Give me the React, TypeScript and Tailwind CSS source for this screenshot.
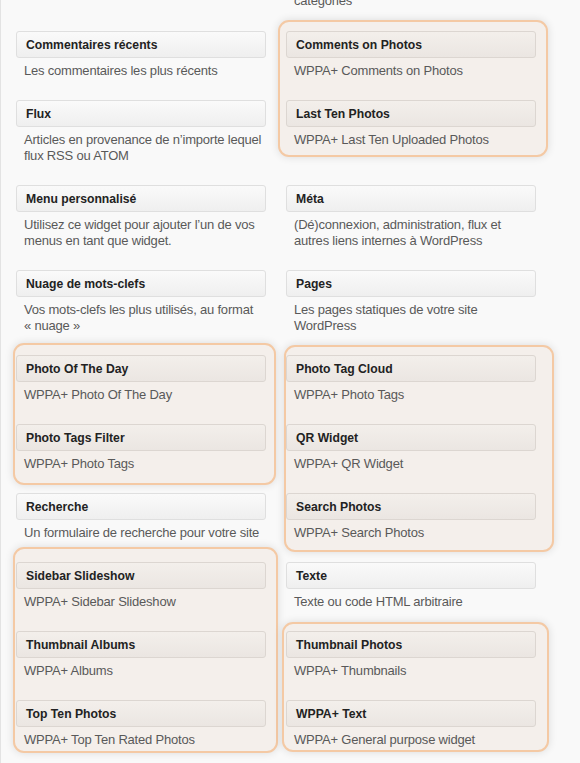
import React from 'react';

type Widget = {
  title: string;
  desc: string[];
  mb?: string;
};

type Group = {
  wrap: string;
  items: Widget[];
};

type Item = Widget | Group;

const font = { fontFamily: '"Liberation Sans", Arial, sans-serif' };

function WidgetBox({ w, hl }: { w: Widget; hl?: boolean }) {
  return (
    <div className={w.mb ?? ''}>
      <div
        className={`h-[27px] rounded-[3px] border pl-[9px] flex items-center text-[12.2px] leading-4 font-bold text-[#222] whitespace-nowrap ${
          hl
            ? 'border-[#dcd6d1] bg-gradient-to-b from-[#f3efeb] to-[#ebe6e2]'
            : 'border-[#dfdfdf] bg-gradient-to-b from-[#fafafa] to-[#efefef]'
        }`}
      >
        {w.title}
      </div>
      <div className="pt-[5px] pl-[8px] text-[13px] leading-4 tracking-[-0.2px] text-[#595959] whitespace-nowrap">
        {w.desc.map((line, i) => (
          <div key={i}>{line}</div>
        ))}
      </div>
    </div>
  );
}

function Column({ items }: { items: Item[] }) {
  return (
    <div className="flex flex-col w-[250px]">
      {items.map((it, i) =>
        'items' in it ? (
          <div
            key={i}
            className={`border-2 border-[#f4c9a4] rounded-[11px] bg-[#f4efeb] shadow-[0_0_8px_rgba(0,0,0,0.12)] ${it.wrap}`}
          >
            {it.items.map((w, j) => (
              <WidgetBox key={j} w={w} hl />
            ))}
          </div>
        ) : (
          <WidgetBox key={i} w={it} />
        )
      )}
    </div>
  );
}

const left: Item[] = [
  { title: 'Commentaires récents', desc: ['Les commentaires les plus récents'], mb: 'mb-[21px]' },
  { title: 'Flux', desc: ['Articles en provenance de n’importe lequel', 'flux RSS ou ATOM'], mb: 'mb-[21px]' },
  { title: 'Menu personnalisé', desc: ['Utilisez ce widget pour ajouter l’un de vos', 'menus en tant que widget.'], mb: 'mb-[21px]' },
  { title: 'Nuage de mots-clefs', desc: ['Vos mots-clefs les plus utilisés, au format', '« nuage »'], mb: 'mb-[9px]' },
  {
    wrap: '-ml-[3px] -mr-[10px] pl-[1px] pr-[8px] pt-[10px] pb-[11px] mb-[8px]',
    items: [
      { title: 'Photo Of The Day', desc: ['WPPA+ Photo Of The Day'], mb: 'mb-[21px]' },
      { title: 'Photo Tags Filter', desc: ['WPPA+ Photo Tags'] },
    ],
  },
  { title: 'Recherche', desc: ['Un formulaire de recherche pour votre site'], mb: 'mb-[6px]' },
  {
    wrap: '-ml-[3px] -mr-[12px] pl-[1px] pr-[10px] pt-[13px] pb-[3px]',
    items: [
      { title: 'Sidebar Slideshow', desc: ['WPPA+ Sidebar Slideshow'], mb: 'mb-[21px]' },
      { title: 'Thumbnail Albums', desc: ['WPPA+ Albums'], mb: 'mb-[21px]' },
      { title: 'Top Ten Photos', desc: ['WPPA+ Top Ten Rated Photos'] },
    ],
  },
];

const right: Item[] = [
  {
    wrap: '-ml-[8px] -mr-[12px] pl-[6px] pr-[10px] pt-[9px] pb-[7px] mb-[28px]',
    items: [
      { title: 'Comments on Photos', desc: ['WPPA+ Comments on Photos'], mb: 'mb-[21px]' },
      { title: 'Last Ten Photos', desc: ['WPPA+ Last Ten Uploaded Photos'] },
    ],
  },
  { title: 'Méta', desc: ['(Dé)connexion, administration, flux et', 'autres liens internes à WordPress'], mb: 'mb-[21px]' },
  { title: 'Pages', desc: ['Les pages statiques de votre site', 'WordPress'], mb: 'mb-[11px]' },
  {
    wrap: '-ml-[2px] -mr-[18px] pl-0 pr-[16px] pt-[8px] pb-[9px] mb-[10px]',
    items: [
      { title: 'Photo Tag Cloud', desc: ['WPPA+ Photo Tags'], mb: 'mb-[21px]' },
      { title: 'QR Widget', desc: ['WPPA+ QR Widget'], mb: 'mb-[21px]' },
      { title: 'Search Photos', desc: ['WPPA+ Search Photos'] },
    ],
  },
  { title: 'Texte', desc: ['Texte ou code HTML arbitraire'], mb: 'mb-[12px]' },
  {
    wrap: '-ml-[4px] -mr-[13px] pl-[2px] pr-[11px] pt-[7px] pb-[2px]',
    items: [
      { title: 'Thumbnail Photos', desc: ['WPPA+ Thumbnails'], mb: 'mb-[21px]' },
      { title: 'WPPA+ Text', desc: ['WPPA+ General purpose widget'] },
    ],
  },
];

export default function App() {
  return (
    <div
      style={font}
      className="h-[763px] overflow-hidden bg-[#f9f9f9] border-l border-[#e3e3e3] pl-[15px]"
    >
      <div className="flex gap-[20px] items-start">
        <div className="pt-[31px]">
          <Column items={left} />
        </div>
        <div className="-mt-[7px]">
          <div className="pl-[8px] text-[13px] leading-4 tracking-[-0.2px] text-[#595959] mb-[11px]">catégories</div>
          <Column items={right} />
        </div>
      </div>
    </div>
  );
}
